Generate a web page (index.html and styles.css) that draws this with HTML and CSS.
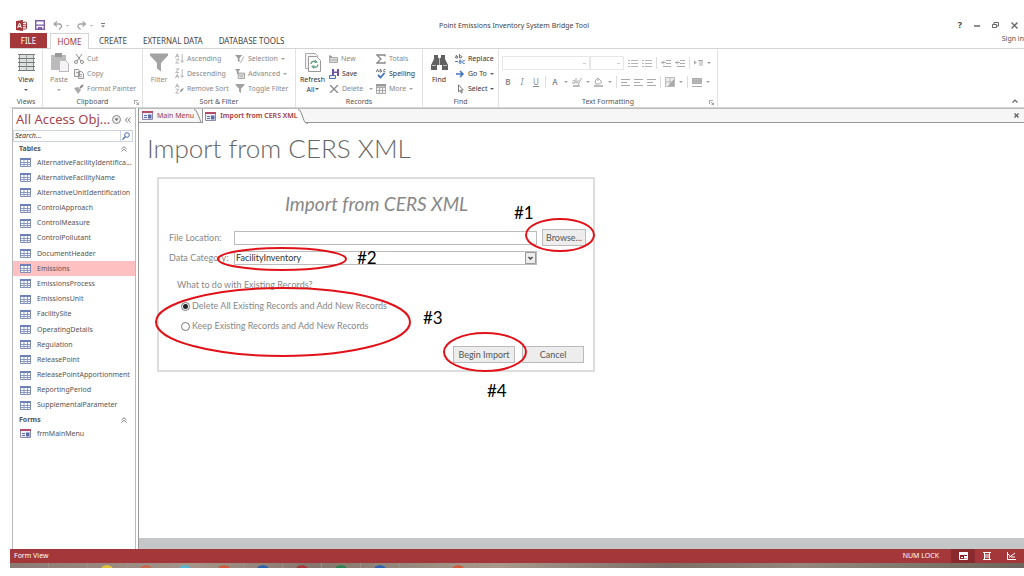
FILE: index.html
```html
<!DOCTYPE html>
<html lang="en">
<head>
<meta charset="utf-8">
<title>Point Emissions Inventory System Bridge Tool</title>
<link rel="stylesheet" href="styles.css">
</head>
<body>
<svg class="defs" aria-hidden="true">
  <symbol id="table" viewBox="0 0 11 9"><path fill="#fff" stroke="#7d8cb5" d="M.5.5h10v8H.5z"/><path fill="#6d80b8" d="M0 0h11v2H0z"/><path stroke="#8a9ac2" d="M4 2v7M7.500 2v7M1 4.500h9M1 6.500h9"/></symbol>
  <symbol id="form" viewBox="0 0 11 9"><path fill="#eef0f8" stroke="#8d8aa8" d="M.5.5h10v8H.5z"/><path fill="#b24c68" d="M0 0h11v2H0z"/><path stroke="#5b6da8" d="M2 4.500h3M2 6.500h3"/><path fill="#5b6da8" d="M6 3.500h3.500v4H6z"/></symbol>
  <symbol id="az" viewBox="0 0 10 12"><path fill="none" stroke="#999" stroke-width=".8" d="M.5 5 2.500.8 4.500 5M1.300 3.500h2.400M.8 6.800h3.500L.8 11h3.700M8 1v9M6.300 8.300 8 10.300 9.700 8.300"/></symbol>
  <symbol id="za" viewBox="0 0 10 12"><path fill="none" stroke="#999" stroke-width=".8" d="M.8.8h3.500L.8 5h3.700M.5 11l2-4.200 2 4.200M1.300 9.500h2.400M8 1v9M6.300 8.300 8 10.300 9.700 8.300"/></symbol>
  <symbol id="azx" viewBox="0 0 10 12"><path fill="none" stroke="#999" stroke-width=".8" d="M.5 5 2.500.8 4.500 5M1.300 3.500h2.400M.8 6.800h3.500L.8 11h3.700"/><path fill="#999" d="M5 9.500 7.500 6H10L7.500 9.500z"/></symbol>
  <symbol id="funnel" viewBox="0 0 18 18"><path fill="#a3a3a3" d="M0 0h18v2l-7 7.500V18l-4-3V9.500L0 2z"/></symbol>
  <symbol id="funnelx" viewBox="0 0 11 11"><path fill="#999" d="M0 1h8L5 4.500V9L3 7.500v-3z"/><path stroke="#aaa" d="m6 10 3.500-7"/></symbol>
  <symbol id="funnelg" viewBox="0 0 11 11"><path fill="#999" d="M0 0h6L4 2.500V6L2 5V2.500z"/><path fill="#f4f4f4" stroke="#999" d="M3.500 4.500h7v6h-7z"/><path stroke="#999" d="M4 6.500h6M5 8.500h4"/></symbol>
  <symbol id="lines" viewBox="0 0 9 7"><path stroke="#aaa" d="M0 .5h9M0 3.500h6M0 6.500h9"/></symbol>
  <symbol id="list" viewBox="0 0 10 9"><path stroke="#b5b5b5" d="M0 1.500h2M3 1.500h7M0 4.500h2M3 4.500h7M0 7.500h2M3 7.500h7"/></symbol>
  <symbol id="indent" viewBox="0 0 10 8"><path stroke="#aaa" fill="none" d="M5 1.500h5M5 4.500h5M2 7.500h8M0 3.500h5M3 1.500 1 3.500l2 2"/></symbol>
  <symbol id="up2" viewBox="0 0 6 6"><path fill="none" stroke="#666" stroke-width=".8" d="M.5 3 3 .7 5.500 3M.5 5.500 3 3.200l2.500 2.300"/></symbol>
  <symbol id="launch" viewBox="0 0 5 5"><path fill="none" stroke="#888" stroke-width=".8" d="M.4 4V.4H4M2 2l2.500 2.500M4.600 2.500v2.100H2.500"/></symbol>
</svg>
<div class="app">
  <header class="titlebar">
    <div class="quick">
      <svg width="11" height="11" viewBox="0 0 11 11"><path fill="#a4373a" d="M0 1 7 0v11l-7-1z"/><path fill="none" stroke="#fff" d="M1.700 8 3.500 3l1.800 5M2.300 6.500h2.400"/><path fill="none" stroke="#a4373a" d="M7 2.500q3-1 3.500 0v6q-1 1-3.500.5M7 4.500q2 .8 3.500 0M7 6.500q2 .8 3.500 0"/></svg>
      <svg width="10" height="10" viewBox="0 0 10 10"><path fill="#fff" stroke="#7d5bab" stroke-width="1.400" d="M.7.7h8.600v8.600H.7z"/><path fill="#7d5bab" d="M1 4.500h8v1.300H1zM3 7h4v3H3z"/></svg>
      <svg width="16" height="9" viewBox="0 0 16 9"><path fill="none" stroke="#a5a5a5" stroke-width="1.300" d="M4 .5 1 3l3 2.500M1 3h5q3 .3 2.500 3L6 8.500"/><path fill="#aaa" d="M13 4h3l-1.500 1.500z"/></svg>
      <svg width="16" height="9" viewBox="0 0 16 9"><path fill="none" stroke="#a5a5a5" stroke-width="1.300" d="m5.500.5 3 2.500-3 2.500M8.500 3h-5Q.5 3.300 1 6l2.500 2.500"/><path fill="#aaa" d="M13 4h3l-1.500 1.500z"/></svg>
      <svg width="4" height="5" viewBox="0 0 4 5"><path stroke="#777" d="M0 .5h4"/><path fill="#777" d="M0 2.500h4l-2 2z"/></svg>
    </div>
    <h1>Point Emissions Inventory System Bridge Tool</h1>
    <div class="window">
      <button aria-label="Help"><b>?</b></button>
      <button aria-label="Minimize"><svg width="6" height="8" viewBox="0 0 6 8"><path stroke="#666" stroke-width="1.500" d="M0 5h6"/></svg></button>
      <button aria-label="Restore"><svg width="7" height="7" viewBox="0 0 7 7"><path fill="none" stroke="#666" d="M.5 2.500h4v3h-4zM2 2.500v-2h4.500V4H5"/></svg></button>
      <button aria-label="Close"><svg width="7" height="7" viewBox="0 0 7 7"><path stroke="#666" stroke-width="1.400" d="m.5.5 6 6M6.500.5l-6 6"/></svg></button>
    </div>
  </header>
  <nav class="tabs">
    <button class="file">FILE</button><button class="home">HOME</button><button class="create">CREATE</button><button>EXTERNAL DATA</button><button>DATABASE TOOLS</button>
    <a class="signin" href="#">Sign in</a>
  </nav>
  <section class="ribbon">
    <div class="group views">
      <div class="tools"><button class="big"><svg width="17" height="19" viewBox="0 0 17 19"><path fill="#d9e2dd" stroke="#8b8b8b" d="M1.500 1.500h14v16h-14z"/><path stroke="#777" d="M0 1.500h17M0 5.500h17M0 9.500h17M0 13.500h17M0 17.500h17"/><path stroke="#999" d="M8.500 1v17"/></svg>View<i class="dd"></i></button></div>
      <div class="caption">Views</div>
    </div>
    <div class="group clip off">
      <div class="tools">
        <button class="big"><svg width="19" height="19" viewBox="0 0 19 19"><path fill="#bbb" d="M1 2h15v15H1z"/><path fill="#999" d="M5 0h7v4H5z"/><path fill="#f5f3f6" stroke="#bbb" d="M9.500 7.500h6l3 3v8h-9z"/></svg>Paste<i class="dd"></i></button>
        <div class="stack">
          <button><svg width="10" height="10" viewBox="0 0 10 10"><path fill="none" stroke="#8f8f8f" d="M2 0 7 7M8 0 3 7"/><circle cx="2" cy="8" r="1.500" fill="none" stroke="#8f8f8f"/><circle cx="8" cy="8" r="1.500" fill="none" stroke="#8f8f8f"/></svg>Cut</button>
          <button><svg width="10" height="10" viewBox="0 0 10 10"><path fill="#f3f3f3" stroke="#999" d="M.5.5h4l1 1v6h-5zM4.500 2.500h3l2 2v5h-5z"/><path stroke="#aaa" d="M2 3.500h2M6 5.500h2M6 7.500h2"/></svg>Copy</button>
          <button><svg width="10" height="10" viewBox="0 0 10 10"><path fill="#aaa" d="m0 4 4-1 3 3-3 4z"/><path stroke="#888" stroke-width="2" d="m6 4 3-3"/></svg>Format Painter</button>
        </div>
      </div>
      <div class="caption">Clipboard<svg class="launch" width="5" height="5"><use href="#launch"/></svg></div>
    </div>
    <div class="group sort off">
      <div class="tools">
        <button class="big"><svg width="18" height="18"><use href="#funnel"/></svg>Filter</button>
        <div class="stack">
          <button><svg width="9" height="11"><use href="#az"/></svg>Ascending</button>
          <button><svg width="9" height="11"><use href="#za"/></svg>Descending</button>
          <button><svg width="9" height="11"><use href="#azx"/></svg>Remove Sort</button>
        </div>
        <div class="stack">
          <button><svg width="10" height="10"><use href="#funnelx"/></svg>Selection<i class="dd"></i></button>
          <button><svg width="10" height="10"><use href="#funnelg"/></svg>Advanced<i class="dd"></i></button>
          <button><svg width="10" height="9"><use href="#funnel"/></svg>Toggle Filter</button>
        </div>
      </div>
      <div class="caption">Sort &amp; Filter</div>
    </div>
    <div class="group records">
      <div class="tools">
        <button class="big"><svg width="16" height="19" viewBox="0 0 16 19"><path fill="#f5f5f5" stroke="#aaa" d="M.5.5h10l2 2v13H.5z"/><path fill="#fff" stroke="#999" d="M3.500 3.500h8l4 4v11h-12z"/><path fill="none" stroke="#63a37e" stroke-width="1.400" d="M6 11q.5-3.500 4.500-2.500M13 11.500q-.5 3.500-4.500 2.500"/><path fill="#63a37e" d="m10 6.500 3 3-3.500.8zM9 16l-3-3 3.500-.8z"/></svg>Refresh<span>All<i class="dd"></i></span></button>
        <div class="stack">
          <button class="off"><svg width="9" height="8" viewBox="0 0 9 8"><path fill="#ddd" stroke="#aaa" d="M.5 2.500h8v5h-8zM.5 5h8"/><path stroke="#999" d="M1 0v3M0 1.500h3"/></svg>New</button>
          <button><svg width="10" height="10" viewBox="0 0 10 10"><path fill="#7652a5" d="M3 0h7v7H3z"/><path fill="#fff" d="M5 0h3v2.500H5zM5 4h3v3H5z"/><path fill="#eee" stroke="#5b6da8" d="M.5 6.500h6v3h-6z"/></svg>Save</button>
          <button class="off"><svg width="10" height="8" viewBox="0 0 10 8"><path stroke="#888" stroke-width="1.300" d="m1 0 8 8M9 0 1 8"/></svg>Delete<i class="dd far"></i></button>
        </div>
        <div class="stack">
          <button class="off"><svg width="10" height="10" viewBox="0 0 10 10"><path fill="none" stroke="#888" stroke-width="1.300" d="M9 2.500V1H1l4 4-4 4h8V7.500"/></svg>Totals</button>
          <button><svg width="10" height="10" viewBox="0 0 10 10"><path fill="none" stroke="#555" stroke-width=".8" d="M.3 3 1.500.3 2.700 3M4 .4V3h1.200Q6.300 2.300 5 1.700 6 .8 5 .4zM9.500.6Q7.500 0 7.500 1.700T9.500 2.800"/><path fill="none" stroke="#3f74b8" stroke-width="1.800" d="m2 6 2.500 2.500L8.500 4"/></svg>Spelling</button>
          <button class="off"><svg width="10" height="10" viewBox="0 0 10 10"><path fill="#f3f3f3" stroke="#aaa" d="M.5.5h9v9h-9zM.5 3.500h9M.5 6.500h9M3.500 3v7M6.500 3v7"/><path fill="#999" d="M0 0h10v2.500H0z"/></svg>More<i class="dd"></i></button>
        </div>
      </div>
      <div class="caption">Records</div>
    </div>
    <div class="group find">
      <div class="tools">
        <button class="big"><svg width="17" height="17" viewBox="0 0 17 17"><path fill="#606060" d="M3 1h4v3h3V1h4v4l3 6v5h-6v-5H6v5H0v-5l3-6z"/><path stroke="#bbb" d="M8.500 4v7M1 11.500h4M12 11.500h4"/></svg>Find</button>
        <div class="stack">
          <button><svg width="10" height="10" viewBox="0 0 10 10"><path fill="none" stroke="#666" stroke-width=".9" d="M.5 2q2-1 2 .3V4Q0 4.500.5 3T2.500 2.500M4.500 0v4q2.500.3 2.500-1.200T4.500 2"/><path fill="none" stroke="#3f74b8" stroke-width=".9" d="M0 7.500h3M4 6.500q2-1 2 .3v2.500Q3.500 9.500 4 8t2-.5M9.800 6.500Q7.500 6 7.500 8t2.300 1.400"/></svg>Replace</button>
          <button><svg width="10" height="8" viewBox="0 0 10 8"><path fill="none" stroke="#3f74b8" stroke-width="1.500" d="M1 4h7M5 1l3 3-3 3"/></svg>Go To<i class="dd"></i></button>
          <button><svg width="10" height="10" viewBox="0 0 10 10"><path fill="#fff" stroke="#777" d="M3.500.8v7l1.800-1.500 1 2.700 1-.5-1-2.500h2z"/></svg>Select<i class="dd"></i></button>
        </div>
      </div>
      <div class="caption">Find</div>
    </div>
    <div class="group text off">
      <div class="fmt">
        <div class="line">
          <select class="font" aria-label="Font" disabled></select><select class="size" aria-label="Font size" disabled></select>
          <svg width="10" height="9"><use href="#list"/></svg><svg width="10" height="9"><use href="#list"/></svg>
          <span class="bar"></span><svg width="10" height="8"><use href="#indent"/></svg><svg width="10" height="8"><use href="#indent"/></svg>
          <span class="bar"></span><svg width="9" height="6" viewBox="0 0 9 6"><path fill="#aaa" d="m0 .5 3 2-3 2z"/><path stroke="#aaa" d="M4 .5h5M6 0v6M8 0v6"/></svg><i class="dd"></i>
        </div>
        <div class="line two">
          <b>B</b><em>I</em><u>U</u><span class="bar"></span><b>A</b><i class="dd"></i>
          <svg width="10" height="10" viewBox="0 0 10 10"><path fill="none" stroke="#aaa" d="M.5 4q3-2 2.500 2-3 1-2.500-1M4 1v5q3 0 2-3M9.500 1 6 8"/><path stroke="#bbb" stroke-width="2" d="M1 9h7"/></svg><i class="dd"></i>
          <svg width="10" height="10" viewBox="0 0 10 10"><path fill="none" stroke="#aaa" d="m1 4 3-3 4 4-3 2H2zM4 1v3"/><path stroke="#bbb" stroke-width="2" d="M0 9h9"/></svg><i class="dd"></i>
          <span class="bar"></span>
          <svg width="9" height="7"><use href="#lines"/></svg><svg width="9" height="7"><use href="#lines"/></svg><svg width="9" height="7"><use href="#lines"/></svg>
          <span class="bar"></span>
          <svg width="10" height="10" viewBox="0 0 10 10"><path fill="#eee" stroke="#bbb" d="M.5.500h9v9h-9zM.5 5h9M5 .5v9"/><path fill="#aaa" d="M9 2v7H3z"/></svg><i class="dd"></i>
          <span class="bar"></span>
          <svg width="10" height="10" viewBox="0 0 10 10"><path fill="#bbb" stroke="#aaa" d="M.5 1.500h9v5h-9zM.5 4h9M0 9.500h10"/></svg><i class="dd"></i>
        </div>
      </div>
      <div class="caption">Text Formatting<svg class="launch" width="5" height="5"><use href="#launch"/></svg></div>
    </div>
    <button class="collapse" aria-label="Collapse ribbon"><svg width="6" height="4" viewBox="0 0 6 4"><path fill="none" stroke="#666" stroke-width="1.200" d="M.5 3.500 3 1l2.500 2.500"/></svg></button>
  </section>
  <div class="body">
    <aside class="nav">
      <div class="navhead"><h2>All Access Obj...</h2>
        <svg width="9" height="9" viewBox="0 0 9 9"><circle cx="4.500" cy="4.500" r="4" fill="#eee" stroke="#888"/><path fill="#666" d="M2.500 3.500h4l-2 2.500z"/></svg>
        <svg width="6" height="6" viewBox="0 0 6 6"><path fill="none" stroke="#666" stroke-width=".9" d="M2.700.5.500 3l2.200 2.500M5.500.5 3.300 3l2.200 2.500"/></svg>
      </div>
      <div class="search"><input type="text" placeholder="Search..." aria-label="Search"><button aria-label="Search"><svg width="8" height="8" viewBox="0 0 8 8"><circle cx="5" cy="3" r="2.300" fill="#fff" stroke="#4a6db0"/><path stroke="#4a6db0" stroke-width="1.300" d="M3.300 4.700.5 7.500"/></svg></button></div>
      <h3>Tables<svg width="6" height="6"><use href="#up2"/></svg></h3>
      <ul class="tables">
        <li><svg><use href="#table"/></svg>AlternativeFacilityIdentifica...</li>
        <li><svg><use href="#table"/></svg>AlternativeFacilityName</li>
        <li><svg><use href="#table"/></svg>AlternativeUnitIdentification</li>
        <li><svg><use href="#table"/></svg>ControlApproach</li>
        <li><svg><use href="#table"/></svg>ControlMeasure</li>
        <li><svg><use href="#table"/></svg>ControlPollutant</li>
        <li><svg><use href="#table"/></svg>DocumentHeader</li>
        <li class="sel"><svg><use href="#table"/></svg>Emissions</li>
        <li><svg><use href="#table"/></svg>EmissionsProcess</li>
        <li><svg><use href="#table"/></svg>EmissionsUnit</li>
        <li><svg><use href="#table"/></svg>FacilitySite</li>
        <li><svg><use href="#table"/></svg>OperatingDetails</li>
        <li><svg><use href="#table"/></svg>Regulation</li>
        <li><svg><use href="#table"/></svg>ReleasePoint</li>
        <li><svg><use href="#table"/></svg>ReleasePointApportionment</li>
        <li><svg><use href="#table"/></svg>ReportingPeriod</li>
        <li><svg><use href="#table"/></svg>SupplementalParameter</li>
      </ul>
      <h3>Forms<svg width="6" height="6"><use href="#up2"/></svg></h3>
      <ul><li><svg><use href="#form"/></svg>frmMainMenu</li></ul>
    </aside>
    <main class="doc">
      <div class="doctabs">
        <button class="t1"><svg width="11" height="9"><use href="#form"/></svg>Main Menu</button>
        <svg width="8" height="14" viewBox="0 0 8 14"><path fill="none" stroke="#888" d="M0 .5q2 0 3 3l3 7q.5 2 1.500 3.500"/></svg>
        <button class="t2"><svg width="11" height="9"><use href="#form"/></svg>Import from CERS XML</button>
        <svg class="end" width="10" height="15" viewBox="0 0 10 15"><path fill="#fff" d="M0 0q2 0 3 3l3 8q1 3 4 4H0z"/><path fill="none" stroke="#888" d="M0 .5q2 0 3 3l3 8q1 3 4 3"/></svg>
        <button class="x" aria-label="Close tab"><svg width="5" height="5" viewBox="0 0 5 5"><path stroke="#555" stroke-width="1.200" d="m.5.5 4 4M4.500.5l-4 4"/></svg></button>
      </div>
      <div class="page">
        <h2>Import from CERS XML</h2>
        <form class="card">
          <h3>Import from CERS XML</h3>
          <div class="fields">
            <label for="loc">File Location:</label><input id="loc" type="text"><button type="button">Browse...</button>
            <label for="cat">Data Category:</label><div class="pick"><select id="cat"><option>FacilityInventory</option></select><svg width="11" height="12" viewBox="0 0 11 12"><path fill="#ececec" stroke="#999" d="M.5.5h10v11H.5z"/><path fill="none" stroke="#444" stroke-width="1.400" d="M3.500 5l2 2 2-2"/></svg></div>
          </div>
          <fieldset>
            <legend>What to do with Existing Records?</legend>
            <label><input type="radio" name="mode" checked>Delete All Existing Records and Add New Records</label>
            <label><input type="radio" name="mode">Keep Existing Records and Add New Records</label>
          </fieldset>
          <div class="actions"><button type="button">Begin Import</button><button type="button">Cancel</button></div>
        </form>
        <svg class="marks" width="460" height="290" viewBox="0 0 460 290">
          <g fill="none" stroke="#e01218" stroke-width="2"><ellipse cx="421" cy="112" rx="34" ry="16"/><ellipse cx="143" cy="136" rx="64" ry="11"/><ellipse cx="144" cy="199" rx="127" ry="34"/><ellipse cx="346" cy="229" rx="41" ry="19"/></g>
          <text x="375" y="96">#1</text><text x="218" y="141">#2</text><text x="284" y="201">#3</text><text x="348" y="274">#4</text>
        </svg>
      </div>
      <div class="foot"></div>
    </main>
  </div>
  <footer class="status"><span>Form View</span><span class="num">NUM LOCK</span>
    <button class="on" aria-label="Form view"><svg width="9" height="8" viewBox="0 0 9 8"><path fill="none" stroke="#fff" d="M.5.5h8v7h-8z"/><path fill="#fff" d="M0 0h9v3H0zM5 4h3v2.500H5z"/><path stroke="#fff" d="M2 5.500h2"/></svg></button>
    <button aria-label="Layout view"><svg width="8" height="8" viewBox="0 0 8 8"><path fill="none" stroke="#fff" d="M0 .5h8M0 7.500h8M1.500 0v8M6.500 0v8M2 3h4M2 5h4"/></svg></button>
    <button aria-label="Design view"><svg width="9" height="8" viewBox="0 0 9 8"><path fill="none" stroke="#fff" d="M.5 0v7.500H9M2 5.500 8 1M1 2l3 3h4"/></svg></button>
  </footer>
  <div class="taskbar"><i></i><i></i><i class="c1"></i><i class="c2"></i><i class="c3"></i><i class="c4"></i><i class="c5"></i><i class="c6"></i><i class="c7"></i><i class="c5"></i><i></i><i class="c4"></i></div>
</div>
</body>
</html>
```
FILE: styles.css
```css
* { box-sizing: border-box; }
body { margin: 0; background: #fff; color: #444; font: 7px/12px "Noto Sans", "Open Sans", sans-serif; }
h1, h2, h3, ul, fieldset { margin: 0; padding: 0; border: 0; font-weight: 400; }
button, input, select { font: inherit; color: inherit; margin: 0; padding: 0; border: 0; background: none; border-radius: 0; }
svg { display: block; flex: none; }
.defs { position: absolute; width: 0; height: 0; }
.app { display: flex; flex-direction: column; height: 100vh; padding: 0 0 8px 10px; }

.titlebar { display: grid; grid-template-columns: 1fr auto 1fr; align-items: center; height: 33px; padding: 15px 6px 0 0; }
.titlebar h1 { font-size: 7px; line-height: 18px; padding-top: 2px; }
.quick { display: flex; align-items: center; gap: 8px; padding-left: 6px; }
.window { display: flex; align-items: center; justify-content: flex-end; gap: 12px; }
.window button { display: flex; }
.window b { font-size: 9px; }

.tabs { display: flex; height: 16px; border-bottom: 1px solid #d5d5d5; font-size: 8px; }
.tabs button { padding: 0 8px; line-height: 15px; text-align: center; white-space: nowrap; }
.tabs .file { width: 37px; background: #a4373a; color: #fff; padding: 0; }
.tabs .home { width: 39px; height: 16px; margin: 0 2px 0 3px; padding: 0; color: #a4373a; background: #fff; border: 1px solid #d5d5d5; border-bottom: 0; line-height: 14px; }
.signin { margin-left: auto; font-size: 7px; color: #555; text-decoration: none; }

.ribbon { display: flex; height: 59px; border-bottom: 1px solid #d5d5d5; }
.group { display: flex; flex-direction: column; justify-content: space-between; border-right: 1px solid #e2e2e2; padding-top: 2px; color: #333; }
.group.off, .off { color: #888; }
.tools { display: flex; }
.caption { position: relative; text-align: center; color: #555; line-height: 11px; }
.launch { position: absolute; right: 3px; top: 4px; }
.big { display: flex; flex-direction: column; align-items: center; width: 32px; padding-top: 2px; line-height: 10px; }
.big svg { height: 19px; margin-bottom: 3px; }
.big > .dd { margin: 4px 0 0; }
.stack { display: flex; flex-direction: column; }
.stack button { display: flex; align-items: center; height: 15px; gap: 3px; white-space: nowrap; }
.dd { display: inline-block; flex: none; border: 2px solid transparent; border-top-color: currentColor; border-bottom: 0; width: 0; vertical-align: 2px; opacity: .8; }
.stack .far { margin-left: 3px; }
.views { width: 33px; }
.clip { width: 100px; }
.clip .stack { margin-left: -1px; }
.sort { width: 153px; }
.sort .stack { width: 60px; }
.records { width: 127px; }
.records .big { width: 33px; }
.records .stack:nth-child(2) { width: 47px; }
.find { width: 76px; }
.text { width: 219px; }
.fmt { padding: 4px 3px 0; }
.line { display: flex; align-items: center; height: 16px; gap: 4px; }
.line.two { height: 22px; padding-left: 1px; font-size: 8px; }
.line.two b, .line.two em, .line.two u { flex: none; width: 10px; text-align: center; }
.line.two b { font-weight: 600; }
.bar { flex: none; width: 1px; height: 12px; background: #ddd; }
.font, .size { flex: none; height: 14px; border: 1px solid #ddd; appearance: none; background: linear-gradient(#bbb, #bbb) right 3px center / 3px 1px no-repeat; }
.font { width: 88px; }
.size { width: 34px; margin-left: -4px; }
.collapse { margin: auto 6px 4px auto; }

.body { display: flex; flex: 1; min-height: 0; }
.nav { flex: none; width: 124px; margin: 0 2px; border: 1px solid #bbb; border-bottom: 0; color: #555; }
.navhead { display: flex; align-items: center; gap: 4px; height: 21px; padding: 0 4px 0 3px; }
.navhead h2 { flex: 1; min-width: 0; font-size: 13px; line-height: 21px; white-space: nowrap; color: #a84450; }
.search { display: flex; height: 12px; border: 1px solid #ccd5e0; margin: 0 2px 0 0; }
.search input { flex: 1; min-width: 0; padding-left: 1px; font-style: italic; }
.search input::placeholder { color: #333; opacity: 1; }
.search button { width: 12px; border-left: 1px solid #ccd5e0; padding-left: 1px; }
.nav h3 { display: flex; align-items: center; justify-content: space-between; height: 13px; padding: 0 8px 0 6px; font-size: 7px; font-weight: 700; }
.nav ul { list-style: none; }
.nav li { display: flex; align-items: center; gap: 6px; height: 15px; padding-left: 7px; white-space: nowrap; }
.nav li svg { width: 11px; height: 9px; }
.nav .tables { display: grid; grid-auto-rows: 1fr; height: 258px; }
.nav .tables li { height: auto; }
.nav .sel { background: #ffc0c2; }

.doc { display: flex; flex-direction: column; flex: 1; min-width: 0; border-left: 1px solid #999; }
.doctabs { display: flex; height: 15px; background: #f6f6f6; border-top: 1px solid #bbb; border-bottom: 1px solid #999; color: #a4373a; }
.doctabs button { display: flex; align-items: center; gap: 4px; white-space: nowrap; }
.t1 { padding-left: 3px; }
.doctabs .t2 { height: 14px; font-weight: 600; background: #fff; padding-left: 2px; border-left: 1px solid #999; }
.doctabs .end { margin-bottom: -1px; }
.doctabs .x { margin-left: auto; padding-right: 5px; }
.page { position: relative; flex: 1; padding: 8px 0 0 8px; font-family: Lato, "Open Sans", sans-serif; font-size: 9px; color: #888; }
.page h2 { font-weight: 300; font-size: 26px; line-height: 34px; padding-bottom: 2px; color: #666; }
.card { width: 438px; margin: 10px 0 0 10px; padding: 13px 9px 7px 10px; border: 2px solid #ddd; }
.card h3 { font-size: 19px; line-height: 24px; font-style: italic; text-align: center; }
.fields { display: grid; grid-template-columns: 60px 303px 44px; column-gap: 5px; row-gap: 5px; align-items: center; margin-top: 13px; }
.fields label { white-space: nowrap; }
.fields input, .fields select { display: block; width: 100%; height: 14px; border: 1px solid #bbb; background: #fff; }
.fields select { appearance: none; color: #333; padding-left: 1px; }
.pick { position: relative; }
.pick svg { position: absolute; right: 1px; top: 1px; pointer-events: none; }
.card button { height: 17px; background: #ededed; border: 1px solid #bbb; color: #555; }
.card fieldset { display: flex; flex-direction: column; padding: 14px 0 0 8px; }
.card legend { float: left; padding: 0; margin-bottom: 5px; line-height: 12px; }
.card fieldset label { display: flex; align-items: center; gap: 2px; height: 20px; padding-left: 4px; }
.card input[type=radio] { appearance: none; width: 9px; height: 9px; border: 1px solid #777; border-radius: 50%; background: #fff; }
.card input[type=radio]:checked { background: radial-gradient(#222 0 2px, #fff 3px); }
.actions { display: flex; justify-content: flex-end; gap: 7px; margin-top: 10px; }
.actions button { width: 62px; }
.marks { position: absolute; left: 0; top: 0; pointer-events: none; }
.marks text { font-size: 17px; fill: #000; }
.foot { height: 11px; background: #c5c6c8; }

.status { display: flex; align-items: center; height: 14px; background: #a4373a; color: #fff; padding: 0 1px 0 4px; }
.status .num { margin-left: auto; margin-right: 12px; }
.status button { display: flex; align-items: center; justify-content: center; width: 24px; height: 14px; }
.status .on { background: #8a2a2e; }
.taskbar { display: flex; height: 5px; background: linear-gradient(90deg, #8a7a74, #a59488 18%, #85766d 30%, #a8998c 48%, #7b6e66 65%, #93877b 78%, #6f655c); }
.taskbar i { width: 39px; border-right: 1px solid #9c9088; background: radial-gradient(ellipse 6px 3px at 50% 100%, var(--c, transparent) 80%, transparent); }
.c1 { --c: #e0c33c; } .c2 { --c: #c96a50; } .c3 { --c: #5bb6d2; } .c4 { --c: #cf5a3c; } .c5 { --c: #2d62ae; } .c6 { --c: #a4373a; } .c7 { --c: #2d8050; }
```
